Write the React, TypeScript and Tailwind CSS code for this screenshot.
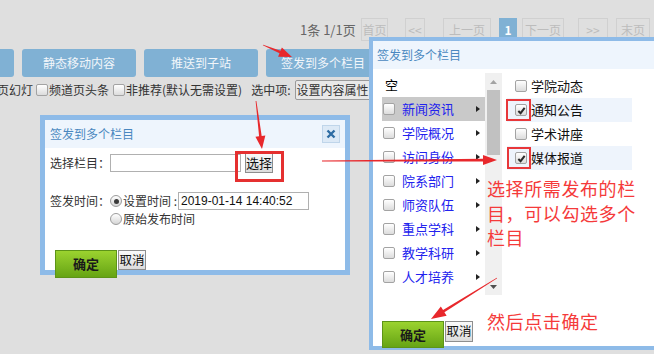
import React from "react";

const cats = ["新闻资讯", "学院概况", "访问身份", "院系部门", "师资队伍", "重点学科", "教学科研", "人才培养", "招生就业"];
const subs = [
  { name: "学院动态", checked: false },
  { name: "通知公告", checked: true },
  { name: "学术讲座", checked: false },
  { name: "媒体报道", checked: true },
];

function Box({ checked = false }: { checked?: boolean }) {
  return (
    <span className="flex h-[12px] w-[12px] shrink-0 items-center justify-center rounded-[2px] border border-[#a3a3a3] bg-linear-to-b from-white to-[#dcdcdc]">
      {checked && (
        <svg viewBox="0 0 10 10" className="h-[9px] w-[9px]">
          <path d="M1.5 5.5 L4 8 L8.5 2" fill="none" stroke="#2b2b2b" strokeWidth="2.2" />
        </svg>
      )}
    </span>
  );
}

function Radio({ checked = false }: { checked?: boolean }) {
  return (
    <span className="flex h-[12px] w-[12px] shrink-0 items-center justify-center rounded-full border border-[#9c9c9c] bg-linear-to-b from-white to-[#d6d6d6]">
      {checked && <span className="h-[5px] w-[5px] rounded-full bg-[#3a3a3a]" />}
    </span>
  );
}

function PageBtn({ cls, children, active = false }: { cls: string; children: React.ReactNode; active?: boolean }) {
  return (
    <span
      className={
        "flex h-[23px] items-center justify-center border text-[12px] " +
        (active ? "border-[#80b1d4] bg-[#80b1d4] font-bold text-white " : "border-[#d0d0d0] text-[#bcbcbc] ") +
        cls
      }
    >
      {children}
    </span>
  );
}

function Arrow({ x1, y1, x2, y2, head = 13, half = 5 }: { x1: number; y1: number; x2: number; y2: number; head?: number; half?: number }) {
  const dx = x2 - x1;
  const dy = y2 - y1;
  const len = Math.hypot(dx, dy);
  const ux = dx / len;
  const uy = dy / len;
  const px = -uy;
  const py = ux;
  const bx = x2 - ux * head;
  const by = y2 - uy * head;
  const pts = [
    [x1 + px * 0.4, y1 + py * 0.4],
    [bx + px * 1.3, by + py * 1.3],
    [bx + px * half, by + py * half],
    [x2, y2],
    [bx - px * half, by - py * half],
    [bx - px * 1.3, by - py * 1.3],
    [x1 - px * 0.4, y1 - py * 0.4],
  ]
    .map((p) => p.join(","))
    .join(" ");
  return <polygon points={pts} fill="#e8282c" />;
}

export default function App() {
  return (
    <div className="relative h-[354px] w-[654px] overflow-hidden bg-[#dfdfdf] font-['Noto_Sans_CJK_SC',sans-serif] text-[12px] text-[#333]">
      {/* pager */}
      <div className="ml-[300px] mt-[18px] flex h-[23px] items-center">
        <span className="w-[57px] text-[13px] text-[#666]">1条 1/1页</span>
        <PageBtn cls="ml-[4px] w-[27px]">首页</PageBtn>
        <PageBtn cls="ml-[17px] w-[20px]">&lt;&lt;</PageBtn>
        <PageBtn cls="ml-[18px] w-[48px]">上一页</PageBtn>
        <PageBtn cls="ml-[8px] w-[18px]" active>
          1
        </PageBtn>
        <PageBtn cls="ml-[5px] w-[42px]">下一页</PageBtn>
        <PageBtn cls="ml-[14px] w-[30px]">&gt;&gt;</PageBtn>
        <PageBtn cls="ml-[8px] w-[34px]">末页</PageBtn>
      </div>

      {/* action buttons */}
      <div className="ml-[-100px] mt-[8px] flex h-[28px] gap-[8px]">
        {["", "静态移动内容", "推送到子站", "签发到多个栏目"].map((t, i) => (
          <span key={i} className="flex w-[114px] items-center justify-center rounded-[3px] bg-[#80b1d4] text-[12px] text-[#f2f6fa]">
            {t}
          </span>
        ))}
      </div>

      {/* options */}
      <div className="ml-[-3px] mt-[3px] flex h-[20px] items-center text-[12px] text-[#333]">
        <span>页幻灯</span>
        <span className="ml-[3px]">
          <Box />
        </span>
        <span className="ml-[1px]">频道页头条</span>
        <span className="ml-[4px]">
          <Box />
        </span>
        <span className="ml-[1px]">非推荐(默认无需设置)</span>
        <span className="ml-[9px]">选中项:</span>
        <span className="ml-[4px] flex h-[20px] w-[76px] items-center justify-center rounded-[2px] border border-[#9a9a9a] bg-[#e8e8e8]">
          设置内容属性
        </span>
      </div>

      {/* small dialog */}
      <div className="absolute left-[40px] top-[115px] h-[160px] w-[310px] border-[5px] border-[#8ebbe8] bg-white">
        <div className="flex h-[28px] items-center justify-between bg-[#eef5fd] px-[5px]">
          <span className="text-[12px] text-[#4a88c0]">签发到多个栏目</span>
          <span className="flex h-[18px] w-[18px] items-center justify-center border border-[#bfd5ea] bg-[#dce9f6]">
            <svg viewBox="0 0 10 10" className="h-[10px] w-[10px]">
              <path d="M1.5 1.5 L8.5 8.5 M8.5 1.5 L1.5 8.5" stroke="#2d6ca3" strokeWidth="2.4" />
            </svg>
          </span>
        </div>
        <div className="pl-[5px]">
          <div className="mt-[4px] flex h-[21px] items-center">
            <span className="w-[60px]">选择栏目：</span>
            <span className="h-[18px] w-[131px] border border-[#b0b0b0]" />
            <span className="ml-[4px] flex h-[21px] w-[28px] items-center justify-center whitespace-nowrap border border-[#8e8e8e] bg-linear-to-b from-[#fafafa] to-[#dcdcdc] text-[13px] text-[#111]">
              选择
            </span>
          </div>
          <div className="mt-[19px] flex h-[18px] items-center">
            <span className="w-[60px]">签发时间：</span>
            <Radio checked />
            <span className="ml-[1px] w-[55px]">设置时间 :</span>
            <span className="flex h-[18px] w-[131px] items-center border border-[#b0b0b0] pl-[2px] font-['Liberation_Sans',sans-serif] text-[12px] text-[#111]">
              2019-01-14 14:40:52
            </span>
          </div>
          <div className="ml-[60px] mt-[2px] flex h-[14px] items-center">
            <Radio />
            <span className="ml-[1px]">原始发布时间</span>
          </div>
          <div className="ml-[5px] mt-[24px] flex items-start">
            <span className="flex h-[28px] w-[62px] items-center justify-center border border-[#5d9418] bg-linear-to-b from-[#9bd32f] to-[#66a414] text-[13px] font-bold text-[#1a1a1a]">
              确定
            </span>
            <span className="ml-[1px] flex h-[20px] w-[28px] items-center justify-center whitespace-nowrap border border-[#8e8e8e] bg-linear-to-b from-[#fafafa] to-[#dcdcdc] text-[12.5px] text-[#111]">
              取消
            </span>
          </div>
        </div>
      </div>

      {/* large dialog */}
      <div className="absolute left-[369px] top-[37px] h-[313px] w-[300px] border-[4px] border-[#8ebbe8] bg-white">
        <div className="flex h-[28px] items-center bg-[#eef5fd] pl-[4px] text-[12px] text-[#4a88c0]">签发到多个栏目</div>
        <div className="flex pl-[9px] pt-[4px]">
          <div className="h-[222px] w-[103px] overflow-hidden">
            <div className="flex h-[24px] items-center pl-[3px] text-[13px] text-black">空</div>
            {cats.map((c, i) => (
              <div key={c} className={"flex h-[24px] items-center pl-[1px] " + (i === 0 ? "bg-[#c9c9c9]" : "")}>
                <Box />
                <span className="ml-[7px] text-[13px] text-[#2222ee]">{c}</span>
                <svg viewBox="0 0 4 6" className="ml-auto mr-[5px] h-[6px] w-[4px]">
                  <path d="M0 0 L4 3 L0 6 Z" fill="#222" />
                </svg>
              </div>
            ))}
          </div>
          <div className="flex h-[222px] w-[17px] flex-col items-center bg-[#f0f0f0]">
            <div className="flex h-[17px] items-center">
              <svg viewBox="0 0 7 4" className="h-[4px] w-[7px]">
                <path d="M0 4 L3.5 0 L7 4 Z" fill="#a3a3a3" />
              </svg>
            </div>
            <div className="h-[65px] w-[13px] bg-[#c1c1c1]" />
            <div className="flex-1" />
            <div className="flex h-[17px] items-center">
              <svg viewBox="0 0 7 4" className="h-[4px] w-[7px]">
                <path d="M0 0 L3.5 4 L7 0 Z" fill="#505050" />
              </svg>
            </div>
          </div>
          <div className="ml-[5px] mt-[1px] w-[125px]">
            {subs.map((s) => (
              <div key={s.name} className={"flex h-[24px] items-center pl-[8px] " + (s.checked ? "bg-[#eef4fc]" : "")}>
                <Box checked={s.checked} />
                <span className="ml-[4px] text-[13px] text-[#111]">{s.name}</span>
              </div>
            ))}
          </div>
        </div>
        <div className="ml-[9px] mt-[26px] flex items-start">
          <span className="flex h-[27px] w-[62px] items-center justify-center border border-[#5d9418] bg-linear-to-b from-[#9bd32f] to-[#66a414] text-[13px] font-bold text-[#1a1a1a]">
            确定
          </span>
          <span className="ml-[1px] flex h-[21px] w-[28px] items-center justify-center whitespace-nowrap border border-[#8e8e8e] bg-linear-to-b from-[#fafafa] to-[#dcdcdc] text-[12.5px] text-[#111]">
            取消
          </span>
        </div>
      </div>

      {/* annotations */}
      <div className="absolute left-[235px] top-[151px] h-[31px] w-[49px] border-[3px] border-[#e53030]" />
      <div className="absolute left-[506px] top-[99px] h-[22px] w-[25px] border-2 border-[#e8373a]" />
      <div className="absolute left-[507px] top-[147px] h-[22px] w-[24px] border-2 border-[#e8373a]" />
      <div className="absolute left-[487px] top-[176px] w-[160px] text-[18px] leading-[24.5px] tracking-[0.6px] text-[#f53a3a]">
        选择所需发布的栏目，可以勾选多个栏目
      </div>
      <div className="absolute left-[487px] top-[308px] text-[18px] tracking-[0.6px] text-[#f53a3a]">然后点击确定</div>

      <svg className="pointer-events-none absolute inset-0" width="654" height="354" viewBox="0 0 654 354">
        <Arrow x1={263} y1={45} x2={292} y2={57} />
        <Arrow x1={256} y1={101} x2={262} y2={149} />
        <Arrow x1={322} y1={161} x2={497} y2={160} head={14} half={5} />
        <Arrow x1={497} y1={278} x2={431} y2={319} head={15} half={5.5} />
      </svg>
    </div>
  );
}
